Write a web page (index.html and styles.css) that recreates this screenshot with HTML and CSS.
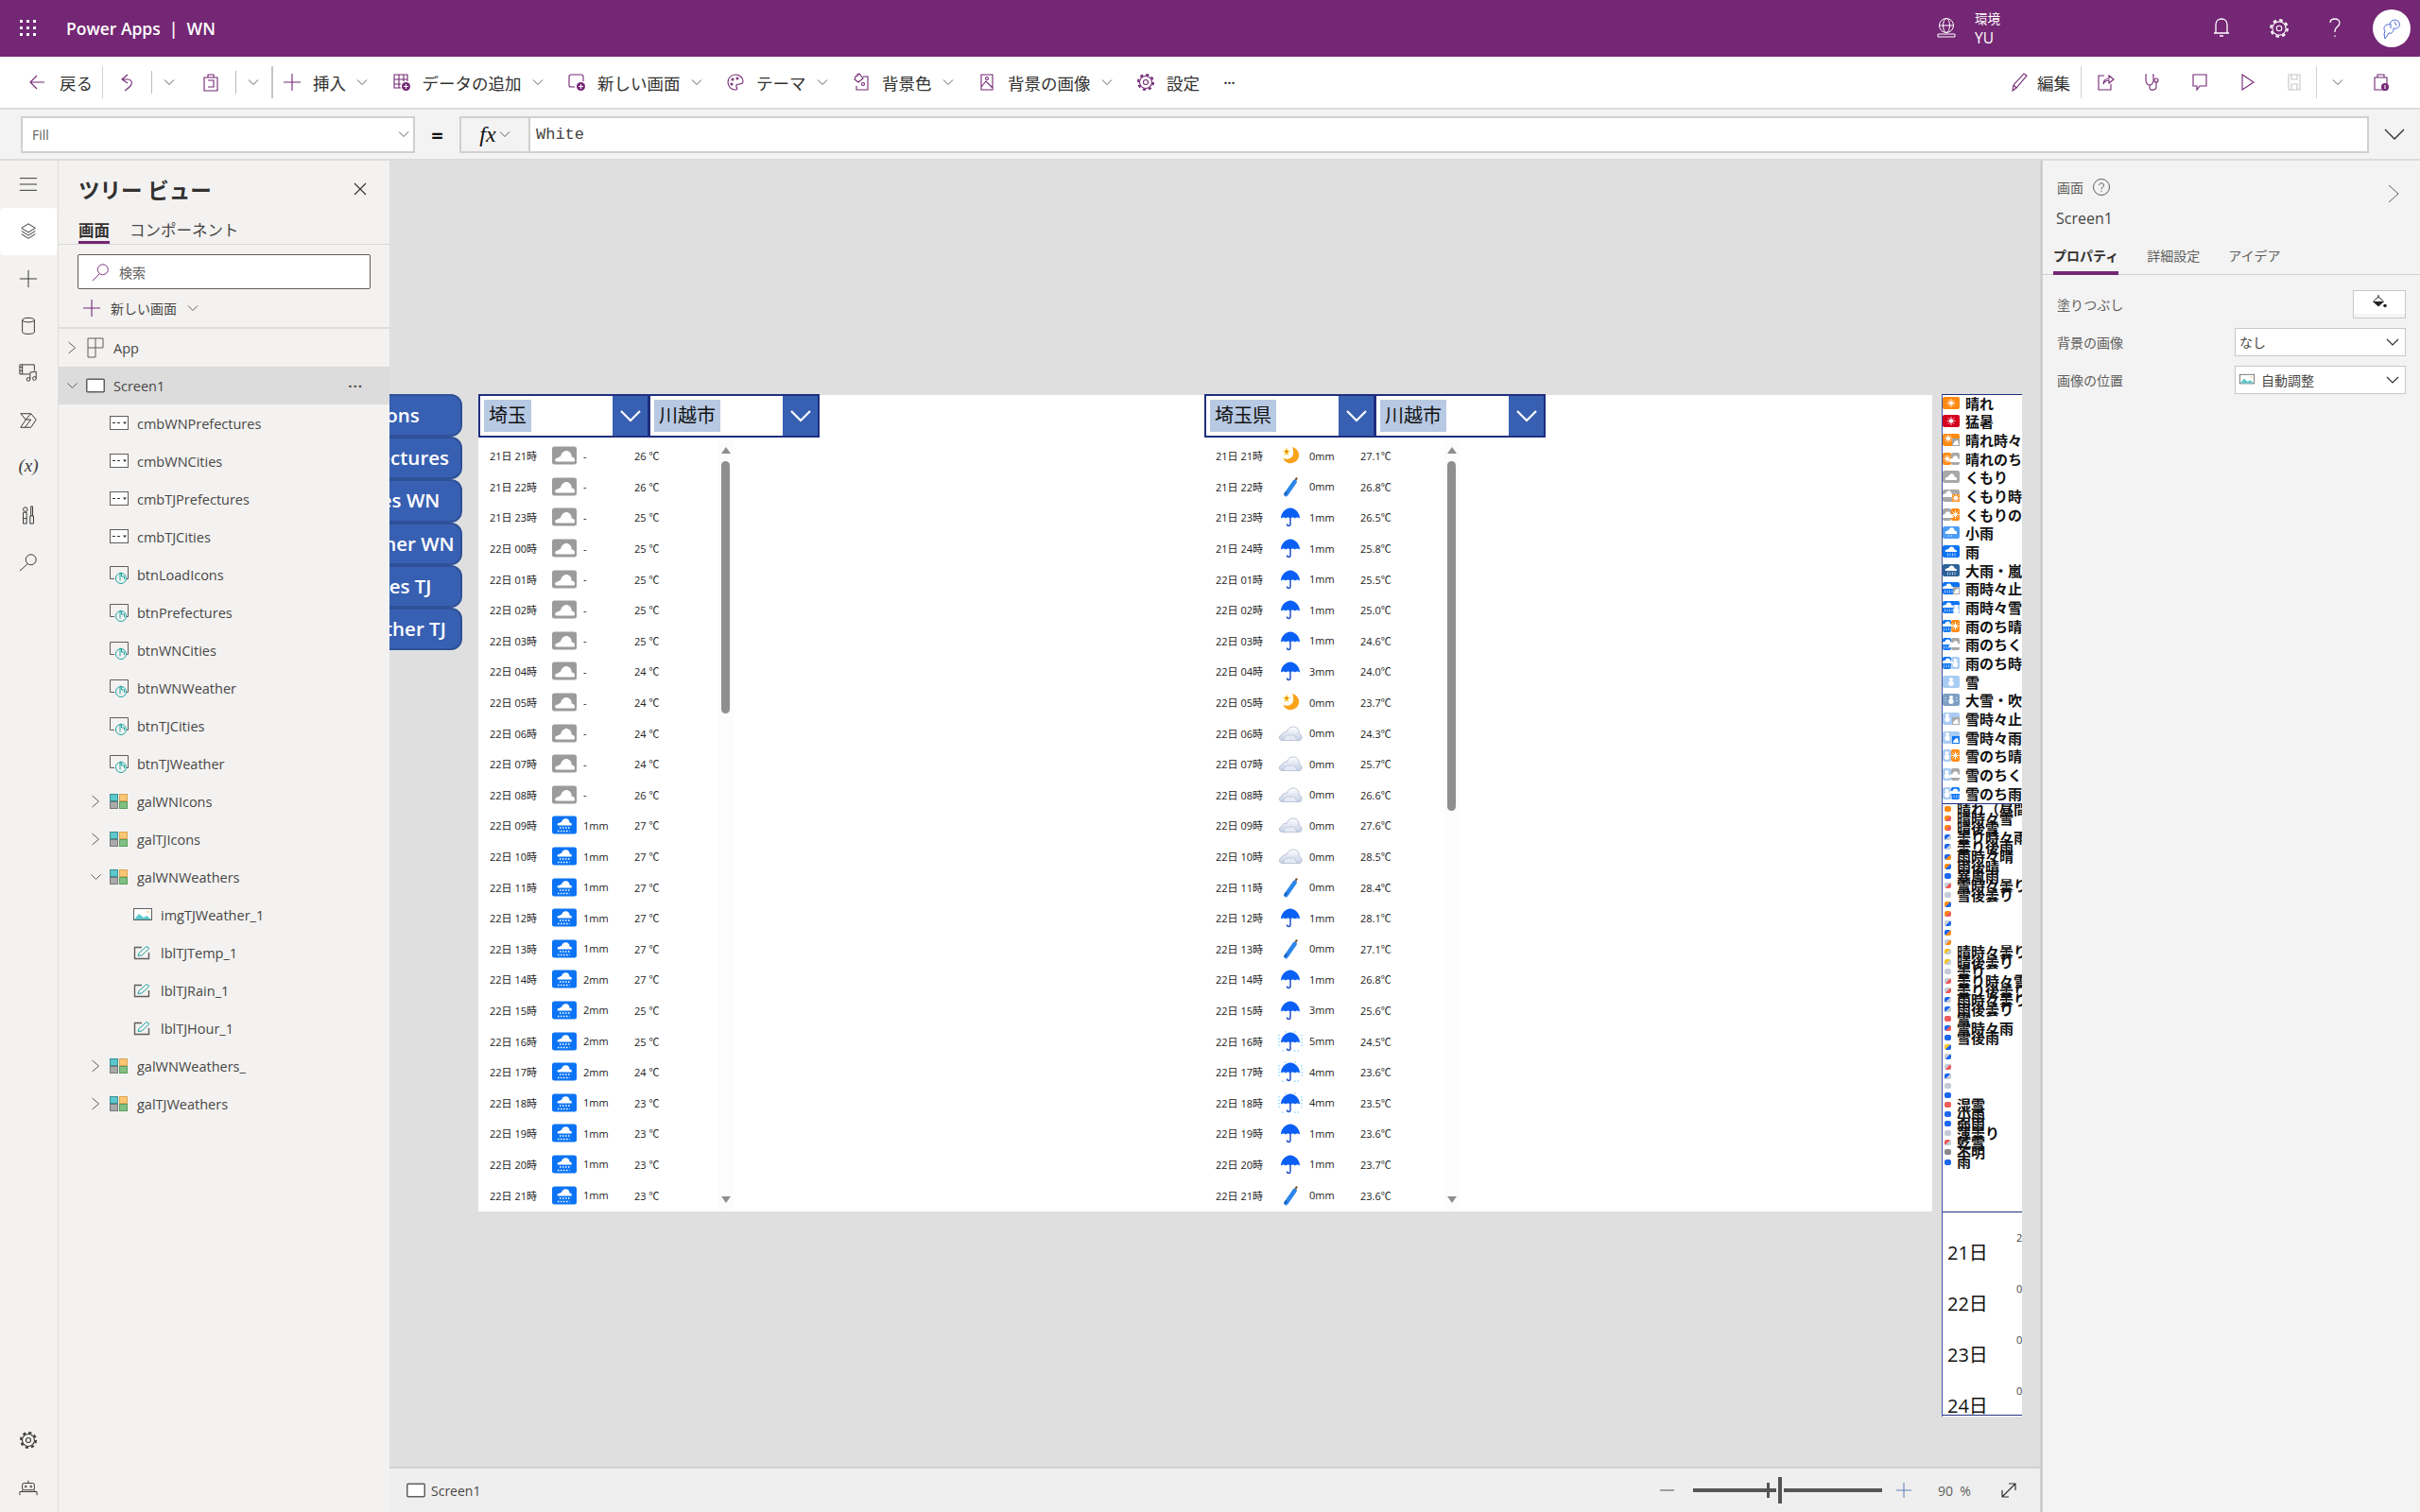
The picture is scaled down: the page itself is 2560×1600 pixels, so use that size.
FILE: index.html
```html
<!DOCTYPE html>
<html lang="ja">
<head>
  <meta charset="UTF-8">
  <title>Power Apps | WN</title>
  <link rel="stylesheet" href="styles.css">
</head>
<body>

<svg class="defs" width="0" height="0">
  <defs>
    <linearGradient id="softfill" x1="0" y1="0" x2="0" y2="1"><stop offset="0" stop-color="#fff"/><stop offset="1" stop-color="#c3cfe6"/></linearGradient>
    <g id="gs"><circle r="2" fill="#fff"/><path d="M0-4.5V4.500M-4.5 0H4.500M-3.2-3.2 3.200 3.200M-3.2 3.200 3.200-3.2" stroke="#fff" stroke-width=".8"/></g>
    <path id="gc" fill="#fff" d="M-5 3C-7 3-7 .5-5 .3-4.5-.5-3.5-1-2.5-.8-2-3 0-4 1.500-3.5 3-3 3.500-1.5 3.500-.5 5.500-.5 6.500 1 6 3Z"/>
    <g id="gr"><path fill="#fff" d="M-5 1C-7 1-7-1-5-1.200-4.5-2-3.500-2.300-2.500-2-2-4 0-4.800 1.500-4.300 3-3.800 3.500-2.500 3.500-1.500 5.500-1.500 6.500 0 6 1Z"/><path stroke="#fff" stroke-dasharray="1 1.500" d="M-4 3H5M-4 4.800H5"/></g>
    <g id="gw"><circle cy="-2.600" r="2" fill="#fff"/><circle cy="1.800" r="2.700" fill="#fff"/></g>

    <symbol id="s-sun" viewBox="0 0 18 13"><rect width="18" height="13" rx="2" fill="#ff8a12"/><use href="#gs" x="9" y="6.500"/></symbol>
    <symbol id="s-hot" viewBox="0 0 18 13"><rect width="18" height="13" rx="2" fill="#d4001c"/><use href="#gs" x="9" y="6.500"/></symbol>
    <symbol id="s-sun-t" viewBox="0 0 18 13"><rect width="18" height="13" rx="2" fill="#ff8a12"/><use href="#gs" x="6" y="5"/><rect x="10" y="5" width="8" height="8" fill="#a4a4a4"/><path fill="#fff" d="M11 12c0-3 3-5 5-5l1 5z"/></symbol>
    <symbol id="s-sun-l" viewBox="0 0 18 13"><rect width="9" height="13" rx="2" fill="#ff8a12"/><rect x="9" width="9" height="13" rx="2" fill="#a8a8a8"/><use href="#gs" x="5" y="6.500"/><use href="#gc" x="13" y="7"/></symbol>
    <symbol id="s-cloud" viewBox="0 0 18 13"><rect width="18" height="13" rx="2" fill="#a8a8a8"/><use href="#gc" x="9" y="7"/></symbol>
    <symbol id="s-cloud-t" viewBox="0 0 18 13"><rect width="18" height="13" rx="2" fill="#a8a8a8"/><use href="#gc" x="6" y="5"/><rect x="10" y="5" width="8" height="8" fill="#ff8a12"/><use href="#gs" x="14" y="9"/></symbol>
    <symbol id="s-cloud-l" viewBox="0 0 18 13"><rect width="9" height="13" rx="2" fill="#a8a8a8"/><rect x="9" width="9" height="13" rx="2" fill="#ff8a12"/><use href="#gc" x="5" y="7"/><use href="#gs" x="13.500" y="6.500"/></symbol>
    <symbol id="s-lrain" viewBox="0 0 18 13"><rect width="18" height="13" rx="2" fill="#4e9df7"/><use href="#gc" x="9" y="5"/><path stroke="#fff" stroke-dasharray="1 2" d="M6 10H12"/></symbol>
    <symbol id="s-rain" viewBox="0 0 18 13"><rect width="18" height="13" rx="2" fill="#0c74f4"/><use href="#gr" x="9" y="6"/></symbol>
    <symbol id="s-storm" viewBox="0 0 18 13"><rect width="18" height="13" rx="2" fill="#2b6299"/><use href="#gr" x="9" y="6"/></symbol>
    <symbol id="s-rain-t" viewBox="0 0 18 13"><rect width="18" height="13" rx="2" fill="#0c74f4"/><use href="#gr" x="6" y="6"/><rect x="11" y="5" width="7" height="8" fill="#a8a8a8"/><path fill="#fff" d="M12 12c0-3 3-5 5-5v5z"/></symbol>
    <symbol id="s-rain-s" viewBox="0 0 18 13"><rect width="18" height="13" rx="2" fill="#0c74f4"/><use href="#gr" x="6" y="6"/><rect x="11" y="4" width="7" height="9" fill="#a9ccf3"/><use href="#gw" x="14.500" y="8.500"/></symbol>
    <symbol id="s-rain-sun" viewBox="0 0 18 13"><rect width="9" height="13" rx="2" fill="#0c74f4"/><rect x="9" width="9" height="13" rx="2" fill="#ff8a12"/><use href="#gr" x="5" y="6"/><use href="#gs" x="13.500" y="6.500"/></symbol>
    <symbol id="s-rain-c" viewBox="0 0 18 13"><rect width="9" height="13" rx="2" fill="#0c74f4"/><rect x="9" width="9" height="13" rx="2" fill="#a8a8a8"/><use href="#gr" x="5" y="6"/><use href="#gc" x="13" y="7"/></symbol>
    <symbol id="s-rain-w" viewBox="0 0 18 13"><rect width="9" height="13" rx="2" fill="#0c74f4"/><rect x="9" width="9" height="13" rx="2" fill="#a9ccf3"/><use href="#gr" x="5" y="6"/><use href="#gw" x="13.500" y="6.500"/></symbol>
    <symbol id="s-snow" viewBox="0 0 18 13"><rect width="18" height="13" rx="2" fill="#a9ccf3"/><use href="#gw" x="9" y="6.500"/></symbol>
    <symbol id="s-bsnow" viewBox="0 0 18 13"><rect width="18" height="13" rx="2" fill="#7e9fc4"/><use href="#gw" x="9" y="6.500"/><path stroke="#fff" stroke-dasharray="1 2" d="M3 4V10M15 4V10"/></symbol>
    <symbol id="s-snow-t" viewBox="0 0 18 13"><rect width="18" height="13" rx="2" fill="#a9ccf3"/><use href="#gw" x="5" y="5.500"/><rect x="10" y="5" width="8" height="8" fill="#a8a8a8"/><path fill="#fff" d="M11 12c0-3 3-5 5-5l1 5z"/></symbol>
    <symbol id="s-snow-r" viewBox="0 0 18 13"><rect width="18" height="13" rx="2" fill="#a9ccf3"/><use href="#gw" x="5" y="5.500"/><rect x="10" y="5" width="8" height="8" fill="#0c74f4"/><path fill="#fff" d="M11 12c0-3 3-5 5-5l1 5z"/></symbol>
    <symbol id="s-snow-sun" viewBox="0 0 18 13"><rect width="9" height="13" rx="2" fill="#a9ccf3"/><rect x="9" width="9" height="13" rx="2" fill="#ff8a12"/><use href="#gw" x="4.500" y="6.500"/><use href="#gs" x="13.500" y="6.500"/></symbol>
    <symbol id="s-snow-c" viewBox="0 0 18 13"><rect width="9" height="13" rx="2" fill="#a9ccf3"/><rect x="9" width="9" height="13" rx="2" fill="#a8a8a8"/><use href="#gw" x="4.500" y="6.500"/><use href="#gc" x="13" y="7"/></symbol>
    <symbol id="s-snow-rr" viewBox="0 0 18 13"><rect width="9" height="13" rx="2" fill="#a9ccf3"/><rect x="9" width="9" height="13" rx="2" fill="#0c74f4"/><use href="#gw" x="4.500" y="6.500"/><use href="#gr" x="13" y="6"/></symbol>

    <symbol id="w-cloud" viewBox="0 0 26 22"><rect y="1.500" width="26" height="19" rx="2.500" fill="#9b9b9b"/><path fill="#fff" d="M5 17.500C2.500 17.500 2.500 13.500 6 13.500 7 12.500 8 12 9 12 10 7.500 14 5 17 6.500 20 7.500 21 10.500 20.500 12.500 23 12.500 24.500 14.500 24 16.500 24 17.500 23 17.500 22 17.500Z"/></symbol>
    <symbol id="w-rain" viewBox="0 0 26 22"><rect y="1.500" width="26" height="19" rx="2.500" fill="#0c74f4"/><path fill="#fff" d="M7 11.500C5 11.500 5 9 7.500 9 8 8.500 9 8 10 8 10.500 5 13.500 3.500 16 4.500 18 5.500 18.500 7 18.500 8.500 20.500 8.500 21.500 10 20.500 11.500Z"/><path stroke="#fff" stroke-width="1.600" stroke-dasharray="1.500 1.500" d="M8 14H20M6 17.500H18.500"/></symbol>
    <symbol id="w-moon" viewBox="0 0 26 22"><path fill="#f9a31a" d="M15 2C19 3 23 7 22 12 21 17 16 20 11 19 8 18 6 16 5.500 14 10 16 15 14 16 10 16.500 7 16 4 15 2Z"/><path fill="#f7c21c" d="M9 2.500 10 5.500 13 6 10.500 8 11.200 11 9 9.300 6.600 11 7.500 8 5 6 8 5.500Z"/><circle cx="9" cy="6.800" r="1" fill="#e25a1c"/></symbol>
    <symbol id="w-closed" viewBox="0 0 26 22"><line x1="8.500" y1="19" x2="17.500" y2="6" stroke="#2c86ea" stroke-width="4.600" stroke-linecap="round"/><line x1="18.500" y1="4" x2="20" y2="1.500" stroke="#7a5230" stroke-width="2.200"/><line x1="7" y1="19.500" x2="9" y2="16.500" stroke="#1259b8" stroke-width="2"/></symbol>
    <symbol id="w-open" viewBox="0 0 26 22"><path fill="#0a5ff5" d="M3 12.500C3 6.500 8 1.500 13 1.500 18 1.500 23 6.500 23 12.500 21 11 19 11 18 12.500 16.500 11 14.500 11 13 12.500 11.500 11 9.500 11 8 12.500 7 11 5 11 3 12.500Z"/><path fill="none" stroke="#2454c8" stroke-width="1.500" d="M13 11V18.500C13 21 9.500 21 9.500 18.500"/></symbol>
    <symbol id="w-heavy" viewBox="0 0 26 22"><use href="#w-open" width="26" height="22"/><path stroke="#63c9ff" stroke-dasharray="1.500 2" d="M1 4V17M25 4V17M4 21H8M17 21H22M7 1H10M17 1H20"/></symbol>
    <symbol id="w-soft" viewBox="0 0 26 22"><path fill="url(#softfill)" stroke="#a9b4c9" stroke-width=".8" d="M4.500 18.500C1 18.500 0 13.500 4 12.500 4.500 10 7 9 9 9.500 10.500 5 15 3 18.500 4.500 22 6 22.500 9 22 11 25.500 12 26.500 18.500 22 18.500Z"/><path fill="#e4e9f3" stroke="#b5bfd2" stroke-width=".6" d="M8 18.500C5.500 18.500 5.500 15 8 14.500 9 12.500 12 12 13.500 13.500 16 12 19 14 18.500 16 20 16 20.500 18.500 19 18.500Z"/></symbol>

    <symbol id="i-chev" viewBox="0 0 12 12"><path d="M1 3.500 6 8.500 11 3.500" fill="none" stroke="#605e5c"/></symbol>
    <symbol id="i-right" viewBox="0 0 12 16"><path d="M2 2 9 8 2 14" fill="none" stroke="#605e5c"/></symbol>
    <symbol id="i-gear" viewBox="0 0 20 20"><circle cx="10" cy="10" r="8" fill="none" stroke="currentColor" stroke-width="2" stroke-dasharray="3.200 3.080"/><circle cx="10" cy="10" r="6.500" fill="none" stroke="currentColor"/><circle cx="10" cy="10" r="2.500" fill="none" stroke="currentColor"/></symbol>
    <symbol id="n-combo" viewBox="0 0 20 16"><rect x=".5" y=".5" width="19" height="14" fill="#fff" stroke="#605e5c"/><path d="M3 7.500H6M8 7.500H11" stroke="#323130"/><path d="M14 6.500H18L16 9Z" fill="#323130"/></symbol>
    <symbol id="n-btn" viewBox="0 0 20 19"><path d="M5 13.500H.5V.5H19.500V13.500H16" fill="none" stroke="#605e5c"/><circle cx="12" cy="13" r="5.500" fill="#f3f2f1" stroke="#1ea49f"/><path d="M11 15.500V7.800C11 6.800 12.500 6.800 12.500 7.800V11H15.500V14" fill="none" stroke="#1ea49f"/></symbol>
    <symbol id="n-gal" viewBox="0 0 20 16"><rect x=".5" y=".5" width="8" height="7" fill="#5cc8cb" stroke="#3d8e90"/><rect x="10.500" y=".5" width="8" height="7" fill="#fcc674" stroke="#d8a552"/><rect x=".5" y="8.500" width="8" height="7" fill="#aaa" stroke="#777"/><rect x="10.500" y="8.500" width="8" height="7" fill="#80c183" stroke="#5b9c5e"/></symbol>
    <symbol id="n-lbl" viewBox="0 0 20 16"><path d="M9 2.500H1.500V14.500H16.500V8" fill="none" stroke="#605e5c" stroke-width="1.400"/><path d="M5 11.500 6 8.500 14 1.500 17 3.500 9 11Z" fill="#f3f2f1" stroke="#1ea49f"/></symbol>
    <symbol id="n-img" viewBox="0 0 20 16"><rect x=".5" y="1.500" width="19" height="12" fill="#fff" stroke="#605e5c"/><path d="M1 13 6 7 11 11 14 9 19 13Z" fill="#5cc8cb"/><circle cx="15.500" cy="5" r="1" fill="#f5c24c"/></symbol>
    <symbol id="n-app" viewBox="0 0 20 22"><path d="M2 1H18V11H10V21H2ZM10 1V11M2 11H10" fill="none" stroke="#605e5c"/></symbol>
    <symbol id="n-screen" viewBox="0 0 20 16"><rect x=".75" y="1.250" width="18.500" height="13.500" fill="#fff" stroke="#605e5c" stroke-width="1.500" rx="1"/></symbol>
  </defs>
</svg>

<header class="topbar">
  <svg class="waffle" width="20" height="20" viewBox="0 0 20 20" fill="#fff">
    <rect x="1" y="1" width="3" height="3"/><rect x="8" y="1" width="3" height="3"/><rect x="15" y="1" width="3" height="3"/>
    <rect x="1" y="8" width="3" height="3"/><rect x="8" y="8" width="3" height="3"/><rect x="15" y="8" width="3" height="3"/>
    <rect x="1" y="15" width="3" height="3"/><rect x="8" y="15" width="3" height="3"/><rect x="15" y="15" width="3" height="3"/>
  </svg>
  <div class="brand">Power Apps&nbsp; |&nbsp; WN</div>
  <div class="env">
    <svg width="22" height="24" viewBox="0 0 22 24" fill="none" stroke="#fff"><circle cx="11" cy="9" r="7.500"/><ellipse cx="11" cy="9" rx="3.500" ry="7.500"/><path d="M3.500 9H18.500M2 18H20V21H2Z"/></svg>
    <div class="env-text"><span>環境</span><span class="env-name">YU</span></div>
  </div>
  <div class="top-icons">
    <svg width="20" height="24" viewBox="0 0 20 24" fill="none" stroke="#fff" stroke-width="1.300"><path d="M4 17V8C4 4 7 2 10 2S16 4 16 8V17ZM2 17H18M8 20H12"/></svg>
    <svg width="22" height="22" class="top-gear"><use href="#i-gear"/></svg>
    <svg width="16" height="24" viewBox="0 0 16 24" fill="none" stroke="#fff" stroke-width="1.300"><path d="M3 6C3 3 5 2 8 2S13 4 13 6.500C13 10 8 10.500 8 14.500V16M8 19.500V21"/></svg>
    <div class="avatar"><svg width="24" height="28" viewBox="0 0 24 28" fill="none" stroke="#4b6bd6"><path d="M5 17C2 13 6 9 10 10 10 5 18 3 20 8 22 13 17 15 14 14 14 18 12 20 9 19L5 25 4 20ZM11 9V14M15 7 17 11"/></svg></div>
  </div>
</header>

<div class="toolbar">
  <div class="tool tool-back"><svg class="ti" viewBox="0 0 20 20"><path d="M18 10H3M10 3 3 10 10 17"/></svg><span>戻る</span></div>
  <div class="sep"></div>
  <svg class="ti tool-undo" viewBox="0 0 20 20"><path d="M11 2 5 7 11 11M5 7H11C15 7 16 10 15 12 14 15 11 17 8 19"/></svg>
  <div class="sep sep-short"></div>
  <svg class="chev tool-chev1"><use href="#i-chev"/></svg>
  <svg class="ti tool-clip" viewBox="0 0 20 20"><path d="M3 5H17V19H3ZM7 5V2H13V5M7 8H13V15H7"/></svg>
  <div class="sep sep-short"></div>
  <svg class="chev tool-chev2"><use href="#i-chev"/></svg>
  <div class="sep sep-dark"></div>
  <div class="tools-main">
    <div class="tool"><svg class="ti" viewBox="0 0 20 20"><path d="M10 1V19M1 10H19"/></svg><span>挿入</span><svg class="chev"><use href="#i-chev"/></svg></div>
    <div class="tool"><svg class="ti" viewBox="0 0 20 20"><path d="M9 16H2V2H16V9M2 7H16M2 12H9M7 2V16M12 2V9"/><circle cx="14.500" cy="14.500" r="4.500" fill="#742774" stroke="none"/><path stroke="#fff" d="M14.500 12V17M12 14.500H17"/></svg><span>データの追加</span><svg class="chev"><use href="#i-chev"/></svg></div>
    <div class="tool"><svg class="ti" viewBox="0 0 20 20"><path d="M8 15H4C2.500 15 2 14 2 13V4C2 3 2.500 2 4 2H15C16.500 2 17 3 17 4V9"/><circle cx="14.500" cy="14.500" r="4.500" fill="#742774" stroke="none"/><path stroke="#fff" d="M14.500 12V17M12 14.500H17"/></svg><span>新しい画面</span><svg class="chev"><use href="#i-chev"/></svg></div>
    <div class="tool"><svg class="ti" viewBox="0 0 20 20"><path d="M10 2C5 2 2 6 2 10 2 15 6 18 10 18 12 18 12 16 11 15 10 13 12 12 14 12 17 12 18 11 18 9 18 5 14 2 10 2Z"/><circle cx="7" cy="7" r="1"/><circle cx="12" cy="6" r="1"/><circle cx="6" cy="12" r="1"/></svg><span>テーマ</span><svg class="chev"><use href="#i-chev"/></svg></div>
    <div class="tool"><svg class="ti" viewBox="0 0 20 20"><path d="M12 4H17V18H5V14M4 4 8 1 12 6 7 10 3 7ZM6 1V4"/><circle cx="12" cy="12" r="1.500"/></svg><span>背景色</span><svg class="chev"><use href="#i-chev"/></svg></div>
    <div class="tool"><svg class="ti" viewBox="0 0 20 20"><path d="M4 2H16V18H4ZM4 15 9 9 16 16"/><circle cx="10" cy="6" r="1.500"/></svg><span>背景の画像</span><svg class="chev"><use href="#i-chev"/></svg></div>
    <div class="tool"><svg class="ti purple-gear"><use href="#i-gear"/></svg><span>設定</span></div>
    <span class="more">···</span>
  </div>
  <div class="tools-right">
    <div class="tool tool-edit"><svg class="ti" viewBox="0 0 20 20"><path d="M3 19 4 13 15 1 18 3 7 16ZM4 13 7 16"/></svg><span>編集</span></div>
    <div class="sep sep-thin"></div>
    <svg class="ti tr-first" viewBox="0 0 20 20"><path d="M9 3H3V18H16V12M8 12C8 8 11 6 14 6V3L19 7 14 11V8C11 8 9 9 8 12Z"/></svg>
    <svg class="ti tr-next" viewBox="0 0 20 20"><path d="M4 2H3V8C3 11 5 13 7 13S11 11 11 8V2H10M7 13V16C7 19 14 19 14 15V10"/><circle cx="14" cy="8" r="2"/></svg>
    <svg class="ti tr-next" viewBox="0 0 20 20"><path d="M3 2H17V14H10L7 18V14H3Z"/></svg>
    <svg class="ti tr-next" viewBox="0 0 20 20"><path d="M5 2 17 10 5 18Z"/></svg>
    <svg class="ti ti-off tr-next" viewBox="0 0 20 20"><path d="M4 2H16V18H4ZM7 2V7H13V2M7 18V12H13V18"/></svg>
    <div class="sep sep-thin tr-sep2"></div>
    <svg class="chev tr-chev"><use href="#i-chev"/></svg>
    <svg class="ti tr-publish" viewBox="0 0 20 20"><path d="M4 5H17V18H4ZM7 5V2H14V5"/><circle cx="15" cy="15" r="4" fill="#742774" stroke="none"/><path stroke="#fff" d="M15 13V17"/></svg>
  </div>
</div>

<div class="formulabar">
  <div class="namebox"><span>Fill</span><svg class="chev"><use href="#i-chev"/></svg></div>
  <div class="eq">=</div>
  <div class="fxbox"><em>fx</em><svg class="chev"><use href="#i-chev"/></svg></div>
  <div class="formula">White</div>
  <svg class="formula-expand" viewBox="0 0 22 14"><path d="M1 2 11 12 21 2" fill="none" stroke="#323130" stroke-width="1.300"/></svg>
</div>

<div class="main">
  <nav class="rail">
    <div class="rail-item"><svg viewBox="0 0 22 22"><path d="M1 4H21M1 11H21M1 18H21"/></svg></div>
    <div class="rail-item active"><svg viewBox="0 0 22 22"><path d="M11 2 19 7 11 12 3 7ZM3 10.500 11 15.500 19 10.500M3 14 11 19 19 14"/></svg></div>
    <div class="rail-item"><svg viewBox="0 0 22 22"><path d="M11 1V21M1 11H21"/></svg></div>
    <div class="rail-item"><svg viewBox="0 0 22 22"><ellipse cx="11" cy="4" rx="7" ry="2.500"/><path d="M4 4V18C4 21 18 21 18 18V4"/></svg></div>
    <div class="rail-item"><svg viewBox="0 0 22 22"><path d="M12 12H1V1H18V8M4 1V12M1 4H4M1 8H4M11 20A2 2 0 1 1 11 16 2 2 0 0 1 11 20ZM13 18V10L20 9V17M20 17A2 2 0 1 1 16 17 2 2 0 0 1 20 17Z"/></svg></div>
    <div class="rail-item"><svg viewBox="0 0 22 22"><path d="M2 3H14L20 10 14 19H2L8 10ZM8 10H14L7 19M14 3 8 10"/></svg></div>
    <div class="rail-item rail-x"><i>(x)</i></div>
    <div class="rail-item"><svg viewBox="0 0 22 22"><path d="M6 8H9V21H5V8ZM7.500 7A2.500 2.500 0 1 1 7.500 2 2.500 2.500 0 0 1 7.500 7ZM13 12H17V21H13ZM14 12V1H16V12M5 15H9"/></svg></div>
    <div class="rail-item"><svg viewBox="0 0 22 22"><circle cx="14" cy="8" r="6"/><path d="M10 13 1 21"/></svg></div>
    <div class="rail-bottom">
      <div class="rail-item rail-gear"><svg class="gear-svg"><use href="#i-gear"/></svg></div>
      <div class="rail-item"><svg viewBox="0 0 22 22"><rect x="4" y="6" width="14" height="8" rx="2"/><path d="M11 6V3M1 20V16H21V20M4 16V14M18 16V14"/><circle cx="8" cy="10" r="1"/><circle cx="14" cy="10" r="1"/></svg></div>
    </div>
  </nav>

  <aside class="treepanel">
    <div class="tree-title"><h2>ツリー ビュー</h2><svg width="14" height="14" viewBox="0 0 14 14"><path d="M1 1 13 13M13 1 1 13" stroke="#323130" stroke-width="1.100"/></svg></div>
    <div class="tree-tabs"><span class="on">画面</span><span>コンポーネント</span></div>
    <div class="tree-search"><svg width="22" height="22" viewBox="0 0 22 22" fill="none" stroke="#742774"><circle cx="13" cy="8" r="6"/><path d="M9 13 1 21"/></svg><span>検索</span></div>
    <div class="tree-new"><svg class="ti" viewBox="0 0 20 20"><path d="M10 1V19M1 10H19"/></svg><span>新しい画面</span><svg class="chev"><use href="#i-chev"/></svg></div>
    <div class="tree-list">
      <div class="node lv0"><svg class="caret"><use href="#i-right"/></svg><svg class="nicon tall"><use href="#n-app"/></svg><span>App</span></div>
      <div class="node lv0 selected"><svg class="chev caret"><use href="#i-chev"/></svg><svg class="nicon"><use href="#n-screen"/></svg><span>Screen1</span><b class="dots">···</b></div>
      <div class="node lv1"><i class="caret"></i><svg class="nicon"><use href="#n-combo"/></svg><span>cmbWNPrefectures</span></div>
      <div class="node lv1"><i class="caret"></i><svg class="nicon"><use href="#n-combo"/></svg><span>cmbWNCities</span></div>
      <div class="node lv1"><i class="caret"></i><svg class="nicon"><use href="#n-combo"/></svg><span>cmbTJPrefectures</span></div>
      <div class="node lv1"><i class="caret"></i><svg class="nicon"><use href="#n-combo"/></svg><span>cmbTJCities</span></div>
      <div class="node lv1"><i class="caret"></i><svg class="nicon tall2"><use href="#n-btn"/></svg><span>btnLoadIcons</span></div>
      <div class="node lv1"><i class="caret"></i><svg class="nicon tall2"><use href="#n-btn"/></svg><span>btnPrefectures</span></div>
      <div class="node lv1"><i class="caret"></i><svg class="nicon tall2"><use href="#n-btn"/></svg><span>btnWNCities</span></div>
      <div class="node lv1"><i class="caret"></i><svg class="nicon tall2"><use href="#n-btn"/></svg><span>btnWNWeather</span></div>
      <div class="node lv1"><i class="caret"></i><svg class="nicon tall2"><use href="#n-btn"/></svg><span>btnTJCities</span></div>
      <div class="node lv1"><i class="caret"></i><svg class="nicon tall2"><use href="#n-btn"/></svg><span>btnTJWeather</span></div>
      <div class="node lv1"><svg class="caret"><use href="#i-right"/></svg><svg class="nicon"><use href="#n-gal"/></svg><span>galWNIcons</span></div>
      <div class="node lv1"><svg class="caret"><use href="#i-right"/></svg><svg class="nicon"><use href="#n-gal"/></svg><span>galTJIcons</span></div>
      <div class="node lv1"><svg class="chev caret"><use href="#i-chev"/></svg><svg class="nicon"><use href="#n-gal"/></svg><span>galWNWeathers</span></div>
      <div class="node lv2"><i class="caret"></i><svg class="nicon"><use href="#n-img"/></svg><span>imgTJWeather_1</span></div>
      <div class="node lv2"><i class="caret"></i><svg class="nicon"><use href="#n-lbl"/></svg><span>lblTJTemp_1</span></div>
      <div class="node lv2"><i class="caret"></i><svg class="nicon"><use href="#n-lbl"/></svg><span>lblTJRain_1</span></div>
      <div class="node lv2"><i class="caret"></i><svg class="nicon"><use href="#n-lbl"/></svg><span>lblTJHour_1</span></div>
      <div class="node lv1"><svg class="caret"><use href="#i-right"/></svg><svg class="nicon"><use href="#n-gal"/></svg><span>galWNWeathers_</span></div>
      <div class="node lv1"><svg class="caret"><use href="#i-right"/></svg><svg class="nicon"><use href="#n-gal"/></svg><span>galTJWeathers</span></div>
    </div>
  </aside>

  <div class="center">
    <div class="canvas">
      <div class="btn-stack">
        <div class="cbtn">Load Icons</div>
        <div class="cbtn">Load Prefectures</div>
        <div class="cbtn">Load Cities WN</div>
        <div class="cbtn">Load Weather WN</div>
        <div class="cbtn">Load Cities TJ</div>
        <div class="cbtn">Load Weather TJ</div>
      </div>

      <div class="screen">
        <section class="wx">
          <div class="combos">
            <div class="combo"><span class="chip">埼玉</span><span class="combo-arrow"><svg viewBox="0 0 24 14"><path d="M2 2 12 12 22 2" fill="none" stroke="#fff" stroke-width="2.200"/></svg></span></div>
            <div class="combo"><span class="chip">川越市</span><span class="combo-arrow"><svg viewBox="0 0 24 14"><path d="M2 2 12 12 22 2" fill="none" stroke="#fff" stroke-width="2.200"/></svg></span></div>
          </div>
          <div class="gallery">
            <div class="row"><span>21日 21時</span><svg class="wi"><use href="#w-cloud"/></svg><span>-</span><span>26 ℃</span></div>
            <div class="row"><span>21日 22時</span><svg class="wi"><use href="#w-cloud"/></svg><span>-</span><span>26 ℃</span></div>
            <div class="row"><span>21日 23時</span><svg class="wi"><use href="#w-cloud"/></svg><span>-</span><span>25 ℃</span></div>
            <div class="row"><span>22日 00時</span><svg class="wi"><use href="#w-cloud"/></svg><span>-</span><span>25 ℃</span></div>
            <div class="row"><span>22日 01時</span><svg class="wi"><use href="#w-cloud"/></svg><span>-</span><span>25 ℃</span></div>
            <div class="row"><span>22日 02時</span><svg class="wi"><use href="#w-cloud"/></svg><span>-</span><span>25 ℃</span></div>
            <div class="row"><span>22日 03時</span><svg class="wi"><use href="#w-cloud"/></svg><span>-</span><span>25 ℃</span></div>
            <div class="row"><span>22日 04時</span><svg class="wi"><use href="#w-cloud"/></svg><span>-</span><span>24 ℃</span></div>
            <div class="row"><span>22日 05時</span><svg class="wi"><use href="#w-cloud"/></svg><span>-</span><span>24 ℃</span></div>
            <div class="row"><span>22日 06時</span><svg class="wi"><use href="#w-cloud"/></svg><span>-</span><span>24 ℃</span></div>
            <div class="row"><span>22日 07時</span><svg class="wi"><use href="#w-cloud"/></svg><span>-</span><span>24 ℃</span></div>
            <div class="row"><span>22日 08時</span><svg class="wi"><use href="#w-cloud"/></svg><span>-</span><span>26 ℃</span></div>
            <div class="row"><span>22日 09時</span><svg class="wi"><use href="#w-rain"/></svg><span>1mm</span><span>27 ℃</span></div>
            <div class="row"><span>22日 10時</span><svg class="wi"><use href="#w-rain"/></svg><span>1mm</span><span>27 ℃</span></div>
            <div class="row"><span>22日 11時</span><svg class="wi"><use href="#w-rain"/></svg><span>1mm</span><span>27 ℃</span></div>
            <div class="row"><span>22日 12時</span><svg class="wi"><use href="#w-rain"/></svg><span>1mm</span><span>27 ℃</span></div>
            <div class="row"><span>22日 13時</span><svg class="wi"><use href="#w-rain"/></svg><span>1mm</span><span>27 ℃</span></div>
            <div class="row"><span>22日 14時</span><svg class="wi"><use href="#w-rain"/></svg><span>2mm</span><span>27 ℃</span></div>
            <div class="row"><span>22日 15時</span><svg class="wi"><use href="#w-rain"/></svg><span>2mm</span><span>25 ℃</span></div>
            <div class="row"><span>22日 16時</span><svg class="wi"><use href="#w-rain"/></svg><span>2mm</span><span>25 ℃</span></div>
            <div class="row"><span>22日 17時</span><svg class="wi"><use href="#w-rain"/></svg><span>2mm</span><span>24 ℃</span></div>
            <div class="row"><span>22日 18時</span><svg class="wi"><use href="#w-rain"/></svg><span>1mm</span><span>23 ℃</span></div>
            <div class="row"><span>22日 19時</span><svg class="wi"><use href="#w-rain"/></svg><span>1mm</span><span>23 ℃</span></div>
            <div class="row"><span>22日 20時</span><svg class="wi"><use href="#w-rain"/></svg><span>1mm</span><span>23 ℃</span></div>
            <div class="row"><span>22日 21時</span><svg class="wi"><use href="#w-rain"/></svg><span>1mm</span><span>23 ℃</span></div>
            <div class="scroll"><i class="up"></i><i class="thumb"></i><i class="down"></i></div>
          </div>
        </section>

        <section class="wx">
          <div class="combos">
            <div class="combo"><span class="chip">埼玉県</span><span class="combo-arrow"><svg viewBox="0 0 24 14"><path d="M2 2 12 12 22 2" fill="none" stroke="#fff" stroke-width="2.200"/></svg></span></div>
            <div class="combo"><span class="chip">川越市</span><span class="combo-arrow"><svg viewBox="0 0 24 14"><path d="M2 2 12 12 22 2" fill="none" stroke="#fff" stroke-width="2.200"/></svg></span></div>
          </div>
          <div class="gallery gallery-tj">
            <div class="row"><span>21日 21時</span><svg class="wi"><use href="#w-moon"/></svg><span>0mm</span><span>27.1℃</span></div>
            <div class="row"><span>21日 22時</span><svg class="wi"><use href="#w-closed"/></svg><span>0mm</span><span>26.8℃</span></div>
            <div class="row"><span>21日 23時</span><svg class="wi"><use href="#w-open"/></svg><span>1mm</span><span>26.5℃</span></div>
            <div class="row"><span>21日 24時</span><svg class="wi"><use href="#w-open"/></svg><span>1mm</span><span>25.8℃</span></div>
            <div class="row"><span>22日 01時</span><svg class="wi"><use href="#w-open"/></svg><span>1mm</span><span>25.5℃</span></div>
            <div class="row"><span>22日 02時</span><svg class="wi"><use href="#w-open"/></svg><span>1mm</span><span>25.0℃</span></div>
            <div class="row"><span>22日 03時</span><svg class="wi"><use href="#w-open"/></svg><span>1mm</span><span>24.6℃</span></div>
            <div class="row"><span>22日 04時</span><svg class="wi"><use href="#w-open"/></svg><span>3mm</span><span>24.0℃</span></div>
            <div class="row"><span>22日 05時</span><svg class="wi"><use href="#w-moon"/></svg><span>0mm</span><span>23.7℃</span></div>
            <div class="row"><span>22日 06時</span><svg class="wi"><use href="#w-soft"/></svg><span>0mm</span><span>24.3℃</span></div>
            <div class="row"><span>22日 07時</span><svg class="wi"><use href="#w-soft"/></svg><span>0mm</span><span>25.7℃</span></div>
            <div class="row"><span>22日 08時</span><svg class="wi"><use href="#w-soft"/></svg><span>0mm</span><span>26.6℃</span></div>
            <div class="row"><span>22日 09時</span><svg class="wi"><use href="#w-soft"/></svg><span>0mm</span><span>27.6℃</span></div>
            <div class="row"><span>22日 10時</span><svg class="wi"><use href="#w-soft"/></svg><span>0mm</span><span>28.5℃</span></div>
            <div class="row"><span>22日 11時</span><svg class="wi"><use href="#w-closed"/></svg><span>0mm</span><span>28.4℃</span></div>
            <div class="row"><span>22日 12時</span><svg class="wi"><use href="#w-open"/></svg><span>1mm</span><span>28.1℃</span></div>
            <div class="row"><span>22日 13時</span><svg class="wi"><use href="#w-closed"/></svg><span>0mm</span><span>27.1℃</span></div>
            <div class="row"><span>22日 14時</span><svg class="wi"><use href="#w-open"/></svg><span>1mm</span><span>26.8℃</span></div>
            <div class="row"><span>22日 15時</span><svg class="wi"><use href="#w-open"/></svg><span>3mm</span><span>25.6℃</span></div>
            <div class="row"><span>22日 16時</span><svg class="wi"><use href="#w-heavy"/></svg><span>5mm</span><span>24.5℃</span></div>
            <div class="row"><span>22日 17時</span><svg class="wi"><use href="#w-heavy"/></svg><span>4mm</span><span>23.6℃</span></div>
            <div class="row"><span>22日 18時</span><svg class="wi"><use href="#w-heavy"/></svg><span>4mm</span><span>23.5℃</span></div>
            <div class="row"><span>22日 19時</span><svg class="wi"><use href="#w-open"/></svg><span>1mm</span><span>23.6℃</span></div>
            <div class="row"><span>22日 20時</span><svg class="wi"><use href="#w-open"/></svg><span>1mm</span><span>23.7℃</span></div>
            <div class="row"><span>22日 21時</span><svg class="wi"><use href="#w-closed"/></svg><span>0mm</span><span>23.6℃</span></div>
            <div class="scroll"><i class="up"></i><i class="thumb"></i><i class="down"></i></div>
          </div>
        </section>
      </div>

      <div class="strip">
        <div class="strip-a">
          <div class="sa"><svg><use href="#s-sun"/></svg><span>晴れ</span></div>
          <div class="sa"><svg><use href="#s-hot"/></svg><span>猛暑</span></div>
          <div class="sa"><svg><use href="#s-sun-t"/></svg><span>晴れ時々くもり</span></div>
          <div class="sa"><svg><use href="#s-sun-l"/></svg><span>晴れのちくもり</span></div>
          <div class="sa"><svg><use href="#s-cloud"/></svg><span>くもり</span></div>
          <div class="sa"><svg><use href="#s-cloud-t"/></svg><span>くもり時々晴れ</span></div>
          <div class="sa"><svg><use href="#s-cloud-l"/></svg><span>くもりのち晴れ</span></div>
          <div class="sa"><svg><use href="#s-lrain"/></svg><span>小雨</span></div>
          <div class="sa"><svg><use href="#s-rain"/></svg><span>雨</span></div>
          <div class="sa"><svg><use href="#s-storm"/></svg><span>大雨・嵐</span></div>
          <div class="sa"><svg><use href="#s-rain-t"/></svg><span>雨時々止む</span></div>
          <div class="sa"><svg><use href="#s-rain-s"/></svg><span>雨時々雪</span></div>
          <div class="sa"><svg><use href="#s-rain-sun"/></svg><span>雨のち晴れ</span></div>
          <div class="sa"><svg><use href="#s-rain-c"/></svg><span>雨のちくもり</span></div>
          <div class="sa"><svg><use href="#s-rain-w"/></svg><span>雨のち時々雪</span></div>
          <div class="sa"><svg><use href="#s-snow"/></svg><span>雪</span></div>
          <div class="sa"><svg><use href="#s-bsnow"/></svg><span>大雪・吹雪</span></div>
          <div class="sa"><svg><use href="#s-snow-t"/></svg><span>雪時々止む</span></div>
          <div class="sa"><svg><use href="#s-snow-r"/></svg><span>雪時々雨</span></div>
          <div class="sa"><svg><use href="#s-snow-sun"/></svg><span>雪のち晴れ</span></div>
          <div class="sa"><svg><use href="#s-snow-c"/></svg><span>雪のちくもり</span></div>
          <div class="sa"><svg><use href="#s-snow-rr"/></svg><span>雪のち雨</span></div>
        </div>
        <div class="strip-b">
          <div class="sb"><i class="o o2"></i><span>晴れ（昼間）</span></div>
          <div class="sb"><i class="o r2"></i><span>晴時々雪</span></div>
          <div class="sb"><i class="o r2"></i><span>晴後雪</span></div>
          <div class="sb"><i class="b g2"></i><span>曇り時々雨</span></div>
          <div class="sb"><i class="b g2"></i><span>曇り後雨</span></div>
          <div class="sb"><i class="b o2"></i><span>雨時々晴</span></div>
          <div class="sb"><i class="o b2"></i><span>雨後晴</span></div>
          <div class="sb"><i class="b b2"></i><span>暴風雨</span></div>
          <div class="sb"><i class="g r2"></i><span>雪時々曇り</span></div>
          <div class="sb"><i class="g g2"></i><span>雪後曇り</span></div>
          <div class="sb"><i class="o b2"></i></div>
          <div class="sb"><i class="o r2"></i></div>
          <div class="sb"><i class="g b2"></i></div>
          <div class="sb"><i class="b o2"></i></div>
          <div class="sb"><i class="g o2"></i></div>
          <div class="sb"><i class="y g2"></i><span>晴時々曇り</span></div>
          <div class="sb"><i class="y g2"></i><span>晴後曇り</span></div>
          <div class="sb"><i class="g g2"></i><span>曇り</span></div>
          <div class="sb"><i class="g r2"></i><span>曇り時々雪</span></div>
          <div class="sb"><i class="g r2"></i><span>曇り後曇り</span></div>
          <div class="sb"><i class="b g2"></i><span>雨時々曇り</span></div>
          <div class="sb"><i class="b g2"></i><span>雨後曇り</span></div>
          <div class="sb"><i class="r r2"></i><span>雪</span></div>
          <div class="sb"><i class="b r2"></i><span>雪時々雨</span></div>
          <div class="sb"><i class="b b2"></i><span>雪後雨</span></div>
          <div class="sb"><i class="y b2"></i></div>
          <div class="sb"><i class="g b2"></i></div>
          <div class="sb"><i class="g r2"></i></div>
          <div class="sb"><i class="b g2"></i></div>
          <div class="sb"><i class="g g2"></i></div>
          <div class="sb"><i class="b b2"></i></div>
          <div class="sb"><i class="r r2"></i><span>湿雪</span></div>
          <div class="sb"><i class="b b2"></i><span>小雨</span></div>
          <div class="sb"><i class="b b2"></i><span>弱雨</span></div>
          <div class="sb"><i class="g g2"></i><span>薄曇り</span></div>
          <div class="sb"><i class="r g2"></i><span>乾雪</span></div>
          <div class="sb"><i class="d d2"></i><span>不明</span></div>
          <div class="sb"><i class="b b2"></i><span>雨</span></div>
        </div>
        <div class="strip-c">
          <div class="sc"><span>21日</span><small>2</small></div>
          <div class="sc"><span>22日</span><small>0</small></div>
          <div class="sc"><span>23日</span><small>0</small></div>
          <div class="sc"><span>24日</span><small>0</small></div>
        </div>
      </div>
    </div>

    <footer class="statusbar">
      <svg class="status-screen"><use href="#n-screen"/></svg>
      <span class="status-name">Screen1</span>
      <div class="zoom">
        <i class="zoom-minus"></i>
        <div class="slider"><i class="tick"></i><i class="handle"></i></div>
        <svg width="16" height="16" viewBox="0 0 16 16"><path d="M8 0V16M0 8H16" stroke="#5a7fb8"/></svg>
        <span class="zoom-value">90&nbsp; %</span>
        <svg width="20" height="20" viewBox="0 0 20 20" fill="none" stroke="#323130" stroke-width="1.200"><path d="M3 17 17 3M10 3H17V10M3 10V17H10"/></svg>
      </div>
    </footer>
  </div>

  <aside class="props">
    <div class="props-head"><span>画面</span><svg width="20" height="20" viewBox="0 0 20 20" fill="none" stroke="#605e5c"><circle cx="10" cy="10" r="8.500"/><path d="M7.500 8C7.500 5 12.500 5 12.500 8 12.500 10 10 10 10 12.500M10 14V15"/></svg><svg class="props-close" width="12" height="20" viewBox="0 0 12 20" fill="none" stroke="#605e5c"><path d="M1 1 11 10 1 19"/></svg></div>
    <div class="props-name">Screen1</div>
    <div class="props-tabs"><span class="on">プロパティ</span><span>詳細設定</span><span>アイデア</span></div>
    <div class="prop-row"><label>塗りつぶし</label><div class="fillbtn"><svg width="16" height="16" viewBox="0 0 16 16"><path d="M7 1V4M7 3 12.500 8M7 3 1.500 8" fill="none" stroke="#222"/><path d="M1 8H13L7 13.500Z" fill="#222"/><circle cx="14" cy="12.500" r="1.800" fill="#222"/></svg></div></div>
    <div class="prop-row"><label>背景の画像</label><div class="dd"><span>なし</span><svg class="dd-chev" viewBox="0 0 14 8"><path d="M1 1 7 7 13 1" fill="none" stroke="#323130" stroke-width="1.200"/></svg></div></div>
    <div class="prop-row"><label>画像の位置</label><div class="dd"><svg width="16" height="13" viewBox="0 0 20 16"><use href="#n-img"/></svg><span>自動調整</span><svg class="dd-chev" viewBox="0 0 14 8"><path d="M1 1 7 7 13 1" fill="none" stroke="#323130" stroke-width="1.200"/></svg></div></div>
  </aside>
</div>

</body>
</html>
```

FILE: styles.css
```css
* {
  box-sizing: border-box;
}
html, body {
  height: 100%;
}
body {
  margin: 0;
  display: flex;
  flex-direction: column;
  overflow: hidden;
  font-family: "Open Sans", "Noto Sans CJK JP", sans-serif;
  color: #323130;
  background: #fff;
}
.defs {
  position: absolute;
}

/* top bar */
.topbar {
  height: 60px;
  flex: none;
  background: #742774;
  color: #fff;
  display: flex;
  align-items: center;
  padding: 0 0 0 20px;
}
.waffle {
  margin-right: 30px;
}
.brand {
  font-size: 17.5px;
  font-weight: 600;
}
.env {
  margin-left: auto;
  display: flex;
  align-items: center;
  gap: 19px;
}
.env-text {
  display: flex;
  flex-direction: column;
  font-size: 13.5px;
  line-height: 20px;
}
.env-name {
  font-size: 15.5px;
}
.top-icons {
  display: flex;
  align-items: center;
  margin-left: 224px;
  gap: 40px;
  padding-right: 10px;
}
.top-gear {
  color: #fff;
}
.avatar {
  width: 40px;
  height: 40px;
  margin-left: -8px;
  border-radius: 50%;
  background: #fff;
  display: flex;
  align-items: center;
  justify-content: center;
}

/* toolbar */
.toolbar {
  height: 56px;
  flex: none;
  background: #fff;
  border-bottom: 2px solid #dcdcdc;
  display: flex;
  align-items: center;
  padding-left: 29px;
  font-size: 17.5px;
  white-space: nowrap;
}
.ti {
  width: 20px;
  height: 20px;
  flex: none;
  fill: none;
  stroke: #742774;
  stroke-width: 1.1;
}
.ti-off {
  stroke: #c8c6c4;
}
.purple-gear {
  color: #742774;
  stroke: none;
}
.chev {
  width: 12px;
  height: 12px;
  flex: none;
}
.tool {
  display: flex;
  align-items: center;
  gap: 12px;
}
.tool .chev {
  margin-left: -1px;
}
.tool-back {
  gap: 14px;
}
.sep {
  width: 1px;
  height: 34px;
  background: #d2d0ce;
  margin-left: 10px;
}
.sep-short {
  height: 24px;
  background: #bdbbb9;
  margin-left: 16px;
}
.sep-dark {
  width: 2px;
  height: 34px;
  background: #c8c6c4;
  margin-left: 13px;
}
.tool-undo {
  margin-left: 15px;
}
.tool-chev1 {
  margin-left: 12px;
}
.tool-clip {
  margin-left: 28px;
}
.tool-chev2 {
  margin-left: 12px;
}
.tools-main {
  display: flex;
  align-items: center;
  gap: 25.5px;
  margin-left: 10px;
}
.more {
  font-size: 14px;
  font-weight: 700;
}
.tools-right {
  margin-left: auto;
  display: flex;
  align-items: center;
  padding-right: 32px;
}
.tool-edit {
  gap: 9px;
}
.sep-thin {
  margin: 0 0 0 11px;
}
.tr-first {
  margin-left: 15px;
}
.tr-next {
  margin-left: 30px;
}
.tr-sep2 {
  margin-left: 13px;
}
.tr-chev {
  margin-left: 16px;
}
.tr-publish {
  margin-left: 29px;
}

/* formula bar */
.formulabar {
  height: 54px;
  flex: none;
  background: #f3f3f3;
  border-bottom: 2px solid #dcdcdc;
  display: flex;
  align-items: center;
  padding-left: 22px;
}
.namebox {
  width: 417px;
  height: 39px;
  background: #fff;
  border: 2px solid #d2d0ce;
  display: flex;
  align-items: center;
  justify-content: space-between;
  padding: 0 4px 0 10px;
  font-size: 14px;
  color: #605e5c;
}
.eq {
  width: 47px;
  text-align: center;
  font-size: 22px;
  font-weight: 700;
  color: #111;
}
.fxbox {
  width: 75px;
  height: 39px;
  background: #f3f3f3;
  border: 2px solid #d2d0ce;
  display: flex;
  align-items: center;
  justify-content: center;
  gap: 3px;
}
.fxbox em {
  font-family: "Liberation Serif", serif;
  font-size: 24px;
  color: #111;
}
.formula {
  width: 1945px;
  height: 39px;
  background: #fff;
  border: 2px solid #d2d0ce;
  border-left: 0;
  padding-left: 6px;
  font-family: "Liberation Mono", monospace;
  font-size: 17px;
  line-height: 35px;
  color: #444;
}
.formula-expand {
  width: 22px;
  height: 14px;
  margin-left: 16px;
}

/* main area */
.main {
  flex: 1;
  display: flex;
  min-height: 0;
}
.rail {
  width: 62px;
  flex: none;
  background: #f3f2f1;
  border-right: 1px solid #e1dfdd;
  display: flex;
  flex-direction: column;
  overflow: hidden;
}
.rail-item {
  height: 50px;
  flex: none;
  width: 60px;
  display: flex;
  align-items: center;
  justify-content: center;
}
.rail-item svg {
  width: 20px;
  height: 20px;
  fill: none;
  stroke: #3b3a39;
  stroke-width: 1.1;
}
.rail-item.active {
  background: #fff;
  border-radius: 4px;
}
.rail-x i {
  font-family: "Liberation Serif", serif;
  font-size: 19px;
  color: #3b3a39;
  margin-top: -4px;
}
.rail-bottom {
  margin-top: auto;
  padding-bottom: 1px;
}
.rail-item .gear-svg {
  color: #3b3a39;
  stroke: none;
}

/* tree panel */
.treepanel {
  width: 350px;
  flex: none;
  background: #f3f2f1;
  position: relative;
  z-index: 2;
}
.tree-title {
  height: 60px;
  display: flex;
  align-items: center;
  justify-content: space-between;
  padding: 0 24px 0 21px;
}
.tree-title h2 {
  margin: 0;
  font-size: 22.5px;
  font-weight: 700;
}
.tree-tabs {
  height: 29px;
  border-bottom: 1px solid #d8d6d4;
  padding-left: 21px;
  display: flex;
  gap: 21px;
  font-size: 16.5px;
  line-height: 28px;
  color: #484644;
}
.tree-tabs .on {
  height: 28px;
  font-weight: 700;
  border-bottom: 3px solid #742774;
  color: #323130;
}
.tree-search {
  height: 37px;
  margin: 10px 20px 0;
  background: #fff;
  border: 1px solid #605e5c;
  border-radius: 2px;
  display: flex;
  align-items: center;
  gap: 9px;
  padding-left: 14px;
  font-size: 14px;
  color: #605e5c;
}
.tree-search svg {
  width: 20px;
  height: 20px;
}
.tree-new {
  height: 42px;
  border-bottom: 2px solid #dfdddb;
  padding-left: 25px;
  display: flex;
  align-items: center;
  gap: 10px;
  font-size: 14px;
  color: #484644;
}
.tree-new .chev {
  margin-left: 1px;
}
.node {
  height: 40px;
  display: flex;
  align-items: center;
  font-size: 14.5px;
  color: #484644;
}
.lv0 {
  padding-left: 7px;
}
.lv1 {
  padding-left: 32px;
}
.lv2 {
  padding-left: 57px;
}
.selected {
  background: #dcdcdc;
}
.caret {
  width: 12px;
  height: 16px;
  margin-right: 10px;
  flex: none;
  transform: translateX(1.5px);
}
.nicon {
  width: 20px;
  height: 16px;
  flex: none;
  margin-right: 9px;
}
.nicon.tall {
  height: 22px;
}
.nicon.tall2 {
  height: 19px;
}
.dots {
  margin-left: auto;
  margin-right: 28px;
  font-size: 15px;
  letter-spacing: 1px;
}

/* canvas */
.center {
  flex: 1;
  min-width: 0;
  display: flex;
  flex-direction: column;
}
.canvas {
  flex: 1;
  background: #dfdfdf;
  position: relative;
  overflow: hidden;
}
.btn-stack {
  position: absolute;
  left: -123px;
  top: 247px;
  width: 200px;
  display: flex;
  flex-direction: column;
}
.cbtn {
  height: 45.2px;
  padding-left: 4px;
  background: #3860b2;
  border: 2px solid #2e5198;
  border-radius: 12px;
  color: #fff;
  font-size: 20.5px;
  font-weight: 600;
  text-align: center;
  line-height: 41px;
  white-space: nowrap;
}
.screen {
  position: absolute;
  left: 94px;
  top: 248px;
  width: 1538px;
  height: 864px;
  background: #fff;
  display: flex;
}
.wx {
  width: 768px;
  flex: none;
}
.combos {
  display: flex;
  margin-top: -1px;
  width: 361px;
}
.combo {
  flex: 1;
  height: 46px;
  border: 2px solid #1f2f7d;
  display: flex;
  justify-content: space-between;
  background: #fff;
}
.combo + .combo {
  margin-left: -1px;
}
.chip {
  height: 34px;
  margin: 4px;
  padding: 0 5px;
  background: #b8c9e3;
  font-size: 20px;
  line-height: 34px;
  color: #111;
}
.combo-arrow {
  width: 37px;
  background: #3860b2;
  display: flex;
  align-items: center;
  justify-content: center;
}
.combo-arrow svg {
  width: 24px;
  height: 14px;
}
.gallery {
  position: relative;
  margin-top: 3px;
  height: 816px;
  overflow: hidden;
}
.row {
  height: 32.6px;
  padding-left: 12px;
  display: grid;
  grid-template-columns: 66px 33px 54px 1fr;
  align-items: center;
  font-size: 11px;
  color: #222;
}
.wi {
  width: 26px;
  height: 22px;
}
.scroll {
  position: absolute;
  left: 254px;
  top: 0;
  bottom: 0;
  width: 16px;
  background: #fcfcfc;
}
.scroll .up, .scroll .down {
  position: absolute;
  left: 3px;
  width: 0;
  height: 0;
  border-left: 5px solid transparent;
  border-right: 5px solid transparent;
}
.scroll .up {
  top: 7px;
  border-bottom: 7px solid #8e8e8e;
}
.scroll .down {
  bottom: 9px;
  border-top: 7px solid #8e8e8e;
}
.scroll .thumb {
  position: absolute;
  left: 3px;
  top: 22px;
  width: 9px;
  height: 267px;
  border-radius: 5px;
  background: #8e8e8e;
}
.gallery-tj .scroll .thumb {
  height: 370px;
}

/* narrow gallery strip at the right edge of the design area */
.strip {
  position: absolute;
  left: 1642px;
  top: 247px;
  width: 85px;
  height: 1082px;
  background: #fff;
  border-left: 1px solid #3f54a5;
  overflow: hidden;
  font-size: 15px;
  color: #111;
}
.strip-a {
  height: 433px;
  border-top: 1.5px solid #1f2f7d;
}
.sa {
  height: 19.67px;
  display: flex;
  align-items: center;
  gap: 6px;
  white-space: nowrap;
  font-weight: 700;
  margin-top: 0;
}
.sa:first-child {
  margin-top: -1.5px;
}
.sa svg {
  width: 18px;
  height: 13px;
  flex: none;
}
.strip-b {
  height: 432px;
  border-top: 1.5px solid #1f2f7d;
  overflow: hidden;
}
.sb {
  height: 10.1px;
  display: flex;
  align-items: center;
  gap: 6px;
  padding-left: 2px;
  white-space: nowrap;
  font-weight: 700;
  line-height: 10.1px;
  --a: #ff8a12;
  --b: #ff8a12;
}
.sb i {
  width: 7px;
  height: 6px;
  flex: none;
  border-radius: 2px;
  background: linear-gradient(135deg, var(--a) 50%, var(--b) 50%);
}
.o { --a: #ff8a12; }
.b { --a: #1c66ee; }
.g { --a: #c5cbd6; }
.r { --a: #ec5a5a; }
.y { --a: #f4c326; }
.d { --a: #888; }
.o2 { --b: #ff8a12; }
.b2 { --b: #1c66ee; }
.g2 { --b: #c5cbd6; }
.r2 { --b: #ec5a5a; }
.d2 { --b: #888; }
.strip-c {
  height: 216px;
  border-top: 1.5px solid #1f2f7d;
  border-bottom: 1.5px solid #1f2f7d;
  padding: 16px 0 0 5px;
  overflow: hidden;
}
.sc {
  height: 54px;
  display: flex;
  white-space: nowrap;
  font-size: 20px;
  line-height: 54px;
}
.sc span {
  width: 73px;
  flex: none;
}
.sc small {
  font-size: 11px;
  line-height: 22px;
  color: #444;
}

/* status bar */
.statusbar {
  height: 48px;
  flex: none;
  background: #efefef;
  border-top: 2px solid #d0d0d0;
  display: flex;
  align-items: center;
  padding-left: 18px;
  font-size: 14px;
  color: #484644;
}
.status-screen {
  width: 20px;
  height: 16px;
  margin-right: 6px;
}
.zoom {
  margin-left: auto;
  display: flex;
  align-items: center;
  padding-right: 23px;
}
.zoom-minus {
  width: 15px;
  height: 2px;
  background: #a19f9d;
  margin-right: 20px;
}
.slider {
  width: 200px;
  height: 4px;
  background: #555;
  position: relative;
  margin-right: 15px;
}
.slider .tick {
  position: absolute;
  left: 78px;
  top: -6px;
  width: 3px;
  height: 16px;
  background: #555;
}
.slider .handle {
  position: absolute;
  left: 90px;
  top: -12px;
  width: 4px;
  height: 28px;
  background: #555;
  box-shadow: 0 0 0 2px #efefef;
}
.zoom-value {
  width: 65px;
  margin-left: 28px;
  color: #605e5c;
  white-space: nowrap;
}

/* properties panel */
.props {
  width: 402px;
  flex: none;
  background: #f3f3f3;
  border-left: 3px solid #cfcfcf;
  font-size: 14px;
  color: #605e5c;
}
.props-head {
  height: 56px;
  display: flex;
  align-items: center;
  padding: 0 22px 0 15px;
  gap: 9px;
}
.props-close {
  margin-left: auto;
  margin-top: 14px;
}
.props-name {
  margin-top: -3px;
  padding-left: 14px;
  font-size: 16px;
  color: #484644;
  height: 20px;
  line-height: 16px;
}
.props-tabs {
  margin-top: 18px;
  height: 30px;
  border-bottom: 1px solid #cfcfcf;
  padding-left: 11px;
  display: flex;
  gap: 30px;
}
.props-tabs span {
  height: 30px;
  line-height: 20px;
}
.props-tabs .on {
  font-weight: 700;
  color: #323130;
  border-bottom: 4px solid #742774;
}
.prop-row {
  height: 40px;
  display: flex;
  align-items: center;
  justify-content: space-between;
  padding: 0 15px;
}
.props-tabs + .prop-row {
  margin-top: 10.5px;
}
.fillbtn {
  width: 56px;
  height: 30px;
  background: #fff;
  border: 1px solid #c8c8c8;
  display: flex;
  justify-content: center;
  padding-top: 3px;
  box-shadow: inset 0 -5px 0 -1px #f5f5f5;
}
.dd {
  width: 181px;
  height: 30px;
  background: #fff;
  border: 1px solid #c8c8c8;
  display: flex;
  align-items: center;
  gap: 7px;
  padding: 0 6px 0 4px;
  color: #484644;
}
.dd-chev {
  width: 14px;
  height: 8px;
  margin-left: auto;
}
```
